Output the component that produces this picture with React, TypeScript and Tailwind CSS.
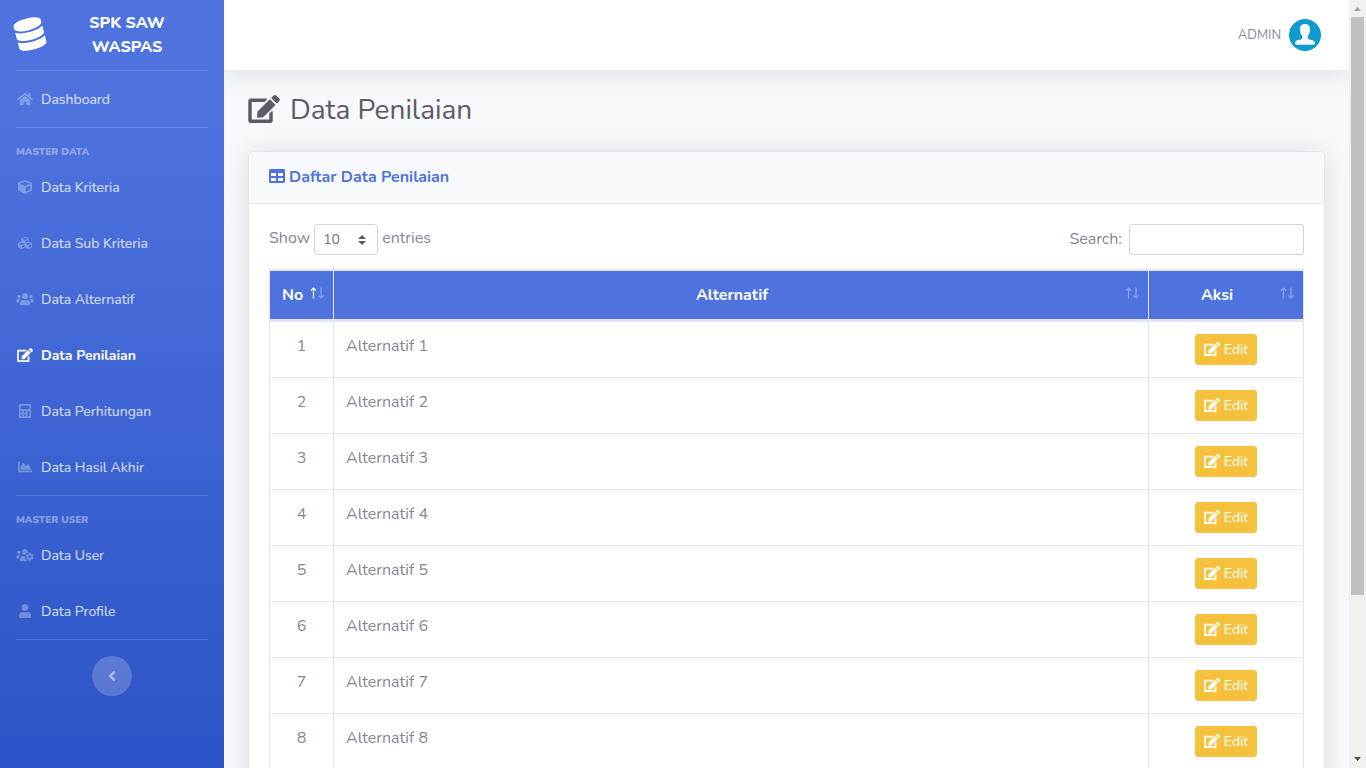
import clsx from 'clsx'
import type { IconType } from 'react-icons'
import {
  FaAngleLeft,
  FaCalculator,
  FaChartArea,
  FaCube,
  FaCubes,
  FaDatabase,
  FaEdit,
  FaHome,
  FaTable,
  FaUser,
  FaUsers,
  FaUsersCog,
} from 'react-icons/fa'

type NavEntry = { label: string; icon: IconType; active?: boolean }

const masterData: NavEntry[] = [
  { label: 'Data Kriteria', icon: FaCube },
  { label: 'Data Sub Kriteria', icon: FaCubes },
  { label: 'Data Alternatif', icon: FaUsers },
  { label: 'Data Penilaian', icon: FaEdit, active: true },
  { label: 'Data Perhitungan', icon: FaCalculator },
  { label: 'Data Hasil Akhir', icon: FaChartArea },
]

const masterUser: NavEntry[] = [
  { label: 'Data User', icon: FaUsersCog },
  { label: 'Data Profile', icon: FaUser },
]

const rows = Array.from({ length: 8 }, (_, i) => ({
  no: i + 1,
  name: `Alternatif ${i + 1}`,
}))

function NavItem({ label, icon: Icon, active }: NavEntry) {
  return (
    <li>
      <a
        href="#"
        className={clsx(
          'flex h-14 items-center gap-[7px] px-4 text-sm',
          active ? 'font-bold text-white' : 'text-white/80',
        )}
      >
        <Icon className={clsx('h-[14px] w-[18px] shrink-0', !active && 'text-white/30')} />
        <span className="pt-0.5">{label}</span>
      </a>
    </li>
  )
}

function NavGroup({ title, items }: { title: string; items: NavEntry[] }) {
  return (
    <div>
      <h2 className="mt-[17px] px-4 text-[10px] leading-[14px] font-black text-white/40 uppercase">
        {title}
      </h2>
      <ul>
        {items.map((item) => (
          <NavItem key={item.label} {...item} />
        ))}
      </ul>
    </div>
  )
}

function Divider() {
  return <hr className="mx-4 border-white/15" />
}

function Sidebar() {
  return (
    <nav className="w-56 shrink-0 bg-linear-to-b from-[#4e73df] from-13% to-[#2c54c6]">
      <a href="#" className="flex h-[70px] items-center px-[14px] text-white">
        <FaDatabase className="mb-0.5 size-8 shrink-0 -rotate-15" />
        <span className="mr-[18px] ml-4 flex-1 px-4 text-center text-base leading-6 font-extrabold uppercase">
          SPK SAW WASPAS
        </span>
      </a>
      <Divider />
      <ul>
        <NavItem label="Dashboard" icon={FaHome} />
      </ul>
      <Divider />
      <NavGroup title="Master Data" items={masterData} />
      <Divider />
      <NavGroup title="Master User" items={masterUser} />
      <Divider />
      <button
        type="button"
        aria-label="Toggle sidebar"
        className="mx-auto mt-4 flex size-10 items-center justify-center rounded-full bg-white/20 text-white/50"
      >
        <FaAngleLeft className="size-4" />
      </button>
    </nav>
  )
}

function Avatar() {
  return (
    <svg viewBox="0 0 32 32" className="size-8">
      <circle cx="16" cy="16" r="16" fill="#0f9bcd" />
      <path
        fill="#f7f8f9"
        d="M16 5c3.400 0 5.200 2.200 5.100 5.400-.1 3-.9 5-2.300 6.500v2.300c.8 1.100 2.200 1.300 4 1.900 2.200.7 3.200 1.500 3.200 2.700 0 1.100-.7 2-1.800 2H7.800c-1.100 0-1.800-.9-1.800-2 0-1.200 1-2 3.200-2.700 1.800-.6 3.200-.8 4-1.900v-2.300c-1.400-1.500-2.200-3.500-2.300-6.500C10.800 7.200 12.600 5 16 5z"
      />
    </svg>
  )
}

function Topbar() {
  return (
    <header className="flex h-[70px] items-center justify-end bg-white px-7 shadow-[0_2px_28px_0_rgba(58,59,69,0.15)]">
      <a href="#" className="flex items-center gap-2 text-[13px] text-[#858796]">
        ADMIN
        <Avatar />
      </a>
    </header>
  )
}

function SortArrows({ asc }: { asc?: boolean }) {
  return (
    <svg viewBox="0 0 14 12" className="h-3 w-[14px]" fill="none" stroke="#fff" strokeWidth="1.2">
      <path d="M3.500 11.500V1M1 3.500 3.500 1 6 3.500" opacity={asc ? 1 : 0.35} />
      <path d="M11 .5V11M8.500 8.500 11 11l2.500-2.500" opacity="0.35" />
    </svg>
  )
}

function HeaderCell({ label, width, asc }: { label: string; width?: string; asc?: boolean }) {
  return (
    <th
      scope="col"
      className={clsx(
        'relative border-t border-r border-b-2 border-[#e3e6f0] py-3 pr-[30px] pl-3 font-bold',
        width,
      )}
    >
      {label}
      <span className="absolute top-4 right-[9px]">
        <SortArrows asc={asc} />
      </span>
    </th>
  )
}

function DataTable() {
  return (
    <table className="w-full table-fixed border-separate border-spacing-0 border-t border-l border-[#e3e6f0]">
      <thead className="bg-[#4e73df] text-center text-white">
        <tr>
          <HeaderCell label="No" width="w-16" asc />
          <HeaderCell label="Alternatif" />
          <HeaderCell label="Aksi" width="w-[155px]" />
        </tr>
      </thead>
      <tbody>
        {rows.map(({ no, name }) => (
          <tr key={no} className="align-top">
            <td className="border-t border-r border-[#e3e6f0] p-3 text-center">{no}</td>
            <td className="border-t border-r border-[#e3e6f0] p-3">{name}</td>
            <td className="border-t border-r border-[#e3e6f0] p-3">
              <button
                type="button"
                className="mx-auto flex h-[31px] items-center gap-1 rounded-[3px] border border-[#f6c23e] bg-[#f6c23e] px-2 text-sm text-white"
              >
                <FaEdit className="mb-0.5 size-4" />
                Edit
              </button>
            </td>
          </tr>
        ))}
      </tbody>
    </table>
  )
}

function TableControls() {
  return (
    <div className="mb-[14px] flex items-start justify-between">
      <label className="flex items-center gap-1">
        <span className="-mt-1">Show</span>
        <span className="relative">
          <select
            defaultValue="10"
            className="h-[31px] w-16 appearance-none rounded-[4px] border border-[#d1d3e2] bg-white pl-2 text-sm text-[#6e707e]"
          >
            <option>10</option>
            <option>25</option>
            <option>50</option>
            <option>100</option>
          </select>
          <svg
            viewBox="0 0 8 10"
            className="pointer-events-none absolute top-[11px] right-3 h-[10px] w-2"
            fill="#5a5c69"
          >
            <path d="M4 0 0 4h8zM4 10 0 6h8z" />
          </svg>
        </span>
        <span className="-mt-1">entries</span>
      </label>
      <label className="flex items-center gap-[7px]">
        <span className="-mt-0.5">Search:</span>
        <input
          type="search"
          className="h-[31px] w-[175px] rounded-[3px] border border-[#d1d3e2] bg-white px-2 text-sm"
        />
      </label>
    </div>
  )
}

function Scrollbar() {
  return (
    <div className="flex w-[17px] shrink-0 flex-col items-center justify-between bg-[#f1f1f1]">
      <svg viewBox="0 0 17 17" className="size-[17px]" fill="#a3a3a3">
        <path d="M5 11h7L8.500 7z" />
      </svg>
      <div className="flex w-[13px] flex-1 flex-col">
        <div className="h-63/80 bg-[#c1c1c1]" />
      </div>
      <svg viewBox="0 0 17 17" className="size-[17px]" fill="#505050">
        <path d="M5 6h7l-3.500 4z" />
      </svg>
    </div>
  )
}

export default function App() {
  return (
    <div className="flex h-screen overflow-hidden bg-[#f8f9fc] font-[Nunito,Lato,sans-serif] text-base leading-6 text-[#858796]">
      <Sidebar />
      <div className="min-w-0 flex-1 overflow-hidden">
        <Topbar />
        <main className="px-6 pt-6">
          <h1 className="mb-6 flex items-center gap-[10px] text-[28px] leading-[33px] text-[#5a5c69]">
            <FaEdit className="mb-1 h-7 w-8" />
            Data Penilaian
          </h1>
          <section className="rounded-[5px] border border-[#e3e6f0] bg-white shadow-[0_2px_28px_0_rgba(58,59,69,0.15)]">
            <h2 className="flex h-[52px] items-center gap-1 rounded-t-[5px] border-b border-[#e3e6f0] bg-[#f8f9fc] px-5 pb-0.5 font-bold text-[#4e73df]">
              <FaTable className="mb-0.5 size-4" />
              Daftar Data Penilaian
            </h2>
            <div className="p-5">
              <TableControls />
              <DataTable />
            </div>
          </section>
        </main>
      </div>
      <Scrollbar />
    </div>
  )
}
